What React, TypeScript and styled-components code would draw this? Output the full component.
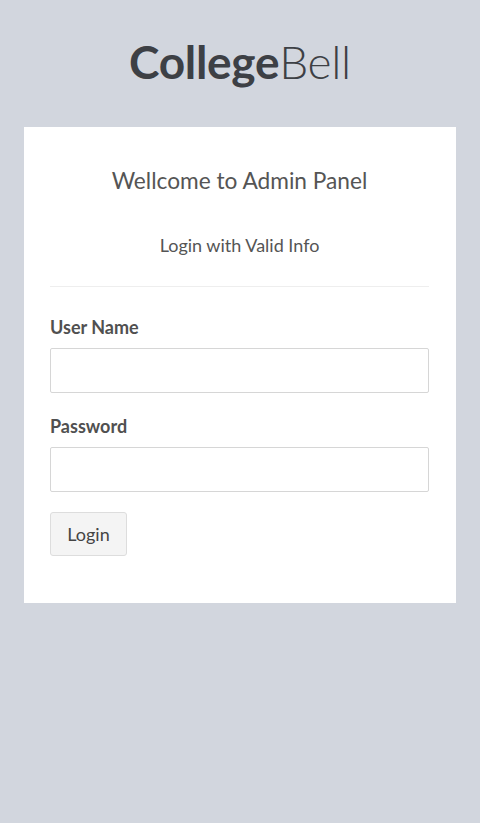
import React from "react";
import styled, { createGlobalStyle } from "styled-components";

const Global = createGlobalStyle`
  html, body { margin: 0; padding: 0; }
  body {
    background: #d2d6de;
    font-family: Lato, "Open Sans", sans-serif;
    color: #444;
  }
`;

const Page = styled.div`
  min-height: 823px;
  background: #d2d6de;
  display: flex;
  flex-direction: column;
  align-items: stretch;
`;

const Logo = styled.div`
  text-align: center;
  font-size: 46px;
  line-height: 1;
  color: #3d4045;
  padding-top: 39px;
  height: 127px;
  box-sizing: border-box;
  letter-spacing: -0.3px;
  b { font-weight: 700; }
  span { font-weight: 300; }
`;

const Card = styled.div`
  background: #fff;
  margin: 0 24px;
  padding: 0 27px 47px 26px;
  display: flex;
  flex-direction: column;
`;

const Title = styled.p`
  margin: 0;
  padding-top: 40px;
  text-align: center;
  font-size: 22.7px;
  line-height: 28px;
  color: #555;
`;

const Sub = styled.p`
  margin: 0;
  padding-top: 39px;
  text-align: center;
  font-size: 18px;
  line-height: 22px;
  color: #555;
`;

const Divider = styled.hr`
  border: 0;
  border-top: 1px solid #eee;
  margin: 30px 0 0;
`;

const Group = styled.div<{ $top: number }>`
  display: flex;
  flex-direction: column;
  margin-top: ${(p) => p.$top}px;
`;

const Label = styled.label`
  font-weight: 700;
  font-size: 18px;
  line-height: 22px;
  color: #505050;
  margin-bottom: 10px;
`;

const Input = styled.input`
  height: 45px;
  box-sizing: border-box;
  border: 1px solid #d6d6d6;
  border-radius: 2px;
  background: #fff;
  font-size: 16px;
  padding: 6px 12px;
  outline: none;
`;

const Button = styled.button`
  align-self: flex-start;
  margin-top: 20px;
  width: 77px;
  height: 44px;
  box-sizing: border-box;
  background: #f4f4f4;
  border: 1px solid #ddd;
  border-radius: 3px;
  color: #444;
  font-family: Lato, "Open Sans", sans-serif;
  font-size: 18px;
`;

export default function App() {
  return (
    <Page>
      <Global />
      <Logo>
        <b>College</b>
        <span>Bell</span>
      </Logo>
      <Card>
        <Title>Wellcome to Admin Panel</Title>
        <Sub>Login with Valid Info</Sub>
        <Divider />
        <Group $top={29}>
          <Label>User Name</Label>
          <Input type="text" />
        </Group>
        <Group $top={22}>
          <Label>Password</Label>
          <Input type="password" />
        </Group>
        <Button>Login</Button>
      </Card>
    </Page>
  );
}
